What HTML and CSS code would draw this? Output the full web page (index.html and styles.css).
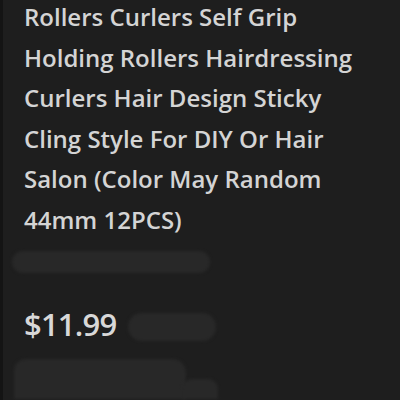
FILE: index.html
```html
<!DOCTYPE html>
<html lang="en">
<head>
    <meta charset="UTF-8">
    <meta name="viewport" content="width=device-width, initial-scale=1.0">
    <title>Product</title>
    <link rel="stylesheet" href="styles.css">
</head>
<body>
    <div class="page">
        <h1 class="title">
            <span>Rollers Curlers Self Grip</span>
            <span>Holding Rollers Hairdressing</span>
            <span>Curlers Hair Design Sticky</span>
            <span>Cling Style For DIY Or Hair</span>
            <span>Salon (Color May Random</span>
            <span>44mm 12PCS)</span>
        </h1>

        <div class="blur blur-seller"></div>

        <div class="price-row">
            <div class="price">$11.99</div>
            <div class="blur blur-unit"></div>
        </div>

        <div class="bottom-row">
            <div class="blur blur-badge"></div>
            <div class="blur blur-tail"></div>
        </div>
    </div>
</body>
</html>
```

FILE: styles.css
```css
body {
    margin: 0;
    background-color: #1e1e1e;
    font-family: 'Open Sans', 'Lato', sans-serif;
    overflow: hidden;
}

.page {
    height: 400px;
    padding: 0 0 0 21px;
    border-left: 3px solid #141414;
    box-sizing: border-box;
    display: flex;
    flex-direction: column;
}

.title {
    margin: 0;
    display: flex;
    flex-direction: column;
    gap: 7.5px;
    font-size: 24px;
    font-weight: 600;
    line-height: 33px;
    color: #d4d4d4;
    white-space: nowrap;
}

.blur {
    background-color: #282828;
    filter: blur(1.5px);
}

.blur-seller {
    width: 198px;
    height: 22px;
    border-radius: 11px;
    margin: 15px 0 0 -12px;
}

.price-row {
    display: flex;
    align-items: center;
    gap: 12px;
    margin-top: 30px;
}

.price {
    font-size: 31px;
    font-weight: 600;
    color: #d8d8d8;
    letter-spacing: -0.8px;
}

.blur-unit {
    width: 88px;
    height: 28px;
    border-radius: 14px;
    margin-top: 6px;
}

.bottom-row {
    display: flex;
    align-items: flex-end;
    margin: 14px 0 0 -10px;
}

.blur-badge {
    width: 172px;
    height: 40px;
    border-radius: 12px 14px 0 0;
}

.blur-tail {
    width: 36px;
    height: 20px;
    border-radius: 10px 10px 0 0;
    margin-left: -4px;
}
```
